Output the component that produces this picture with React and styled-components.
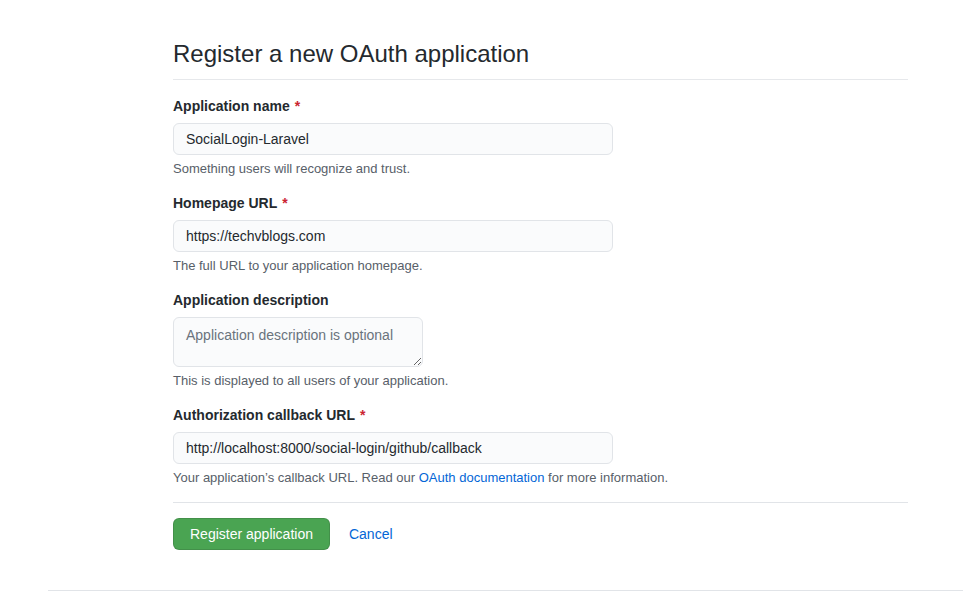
import React from "react";
import styled, { createGlobalStyle } from "styled-components";

const Global = createGlobalStyle`
  html, body { margin: 0; padding: 0; background: #fff; }
  body {
    font-family: "Liberation Sans", Arial, Helvetica, sans-serif;
    font-size: 14px;
    color: #24292e;
  }
  * { box-sizing: border-box; }
`;

const Page = styled.div`
  width: 963px;
  min-height: 591px;
  display: flex;
  flex-direction: column;
`;

const Main = styled.main`
  padding: 39px 55px 0 173px;
`;

const Header = styled.div`
  border-bottom: 1px solid #e6e8eb;
  padding-bottom: 10px;
  margin-bottom: 15px;
`;

const Title = styled.h1`
  margin: 0;
  font-size: 24px;
  line-height: 30px;
  font-weight: 400;
  color: #24292e;
`;

const Form = styled.form`
  display: flex;
  flex-direction: column;
`;

const Group = styled.div`
  display: flex;
  flex-direction: column;
  align-items: flex-start;
  margin-bottom: 14px;
`;

const Label = styled.label`
  font-weight: 700;
  font-size: 14px;
  line-height: 20px;
  margin: 1px 0 7px;
  color: #24292e;
`;

const Req = styled.span`
  color: #cb2431;
  margin-left: 5px;
`;

const Input = styled.input`
  width: 440px;
  height: 32px;
  padding: 5px 12px;
  font: inherit;
  font-size: 14px;
  color: #24292e;
  background: #fafbfc;
  border: 1px solid #e1e4e8;
  border-radius: 6px;
  outline: none;
`;

const TextArea = styled.textarea`
  width: 250px;
  height: 50px;
  padding: 7px 12px;
  font: inherit;
  font-size: 14px;
  line-height: 20px;
  color: #24292e;
  background: #fafbfc;
  border: 1px solid #e1e4e8;
  border-radius: 6px;
  outline: none;
  resize: vertical;
  &::placeholder { color: #6a737d; }
`;

const Note = styled.p`
  margin: 5px 0 0;
  font-size: 13px;
  line-height: 18px;
  color: #586069;
`;

const Link = styled.a`
  color: #0366d6;
  text-decoration: none;
`;

const Divider = styled.hr`
  border: 0;
  border-top: 1px solid #e1e4e8;
  margin: 1px 0 15px;
`;

const Actions = styled.div`
  display: flex;
  align-items: center;
  gap: 19px;
`;

const Button = styled.button`
  height: 32px;
  padding: 0 16px;
  font: inherit;
  font-size: 14px;
  color: #fff;
  background: #4aa452;
  border: 1px solid rgba(27, 31, 35, 0.15);
  border-radius: 6px;
  cursor: pointer;
`;

const Footer = styled.footer`
  margin-top: 40px;
  margin-left: 48px;
  border-top: 1px solid #e1e4e8;
  height: 1px;
`;

export default function App() {
  return (
    <Page>
      <Global />
      <Main>
        <Header>
          <Title>Register a new OAuth application</Title>
        </Header>
        <Form onSubmit={(e) => e.preventDefault()}>
          <Group>
            <Label>
              Application name<Req>*</Req>
            </Label>
            <Input defaultValue="SocialLogin-Laravel" />
            <Note>Something users will recognize and trust.</Note>
          </Group>
          <Group>
            <Label>
              Homepage URL<Req>*</Req>
            </Label>
            <Input defaultValue="https://techvblogs.com" />
            <Note>The full URL to your application homepage.</Note>
          </Group>
          <Group>
            <Label>Application description</Label>
            <TextArea placeholder="Application description is optional" />
            <Note>This is displayed to all users of your application.</Note>
          </Group>
          <Group>
            <Label>
              Authorization callback URL<Req>*</Req>
            </Label>
            <Input defaultValue="http://localhost:8000/social-login/github/callback" />
            <Note>
              Your application’s callback URL. Read our{" "}
              <Link href="#">OAuth documentation</Link> for more information.
            </Note>
          </Group>
          <Divider />
          <Actions>
            <Button type="submit">Register application</Button>
            <Link href="#">Cancel</Link>
          </Actions>
        </Form>
      </Main>
      <Footer />
    </Page>
  );
}
